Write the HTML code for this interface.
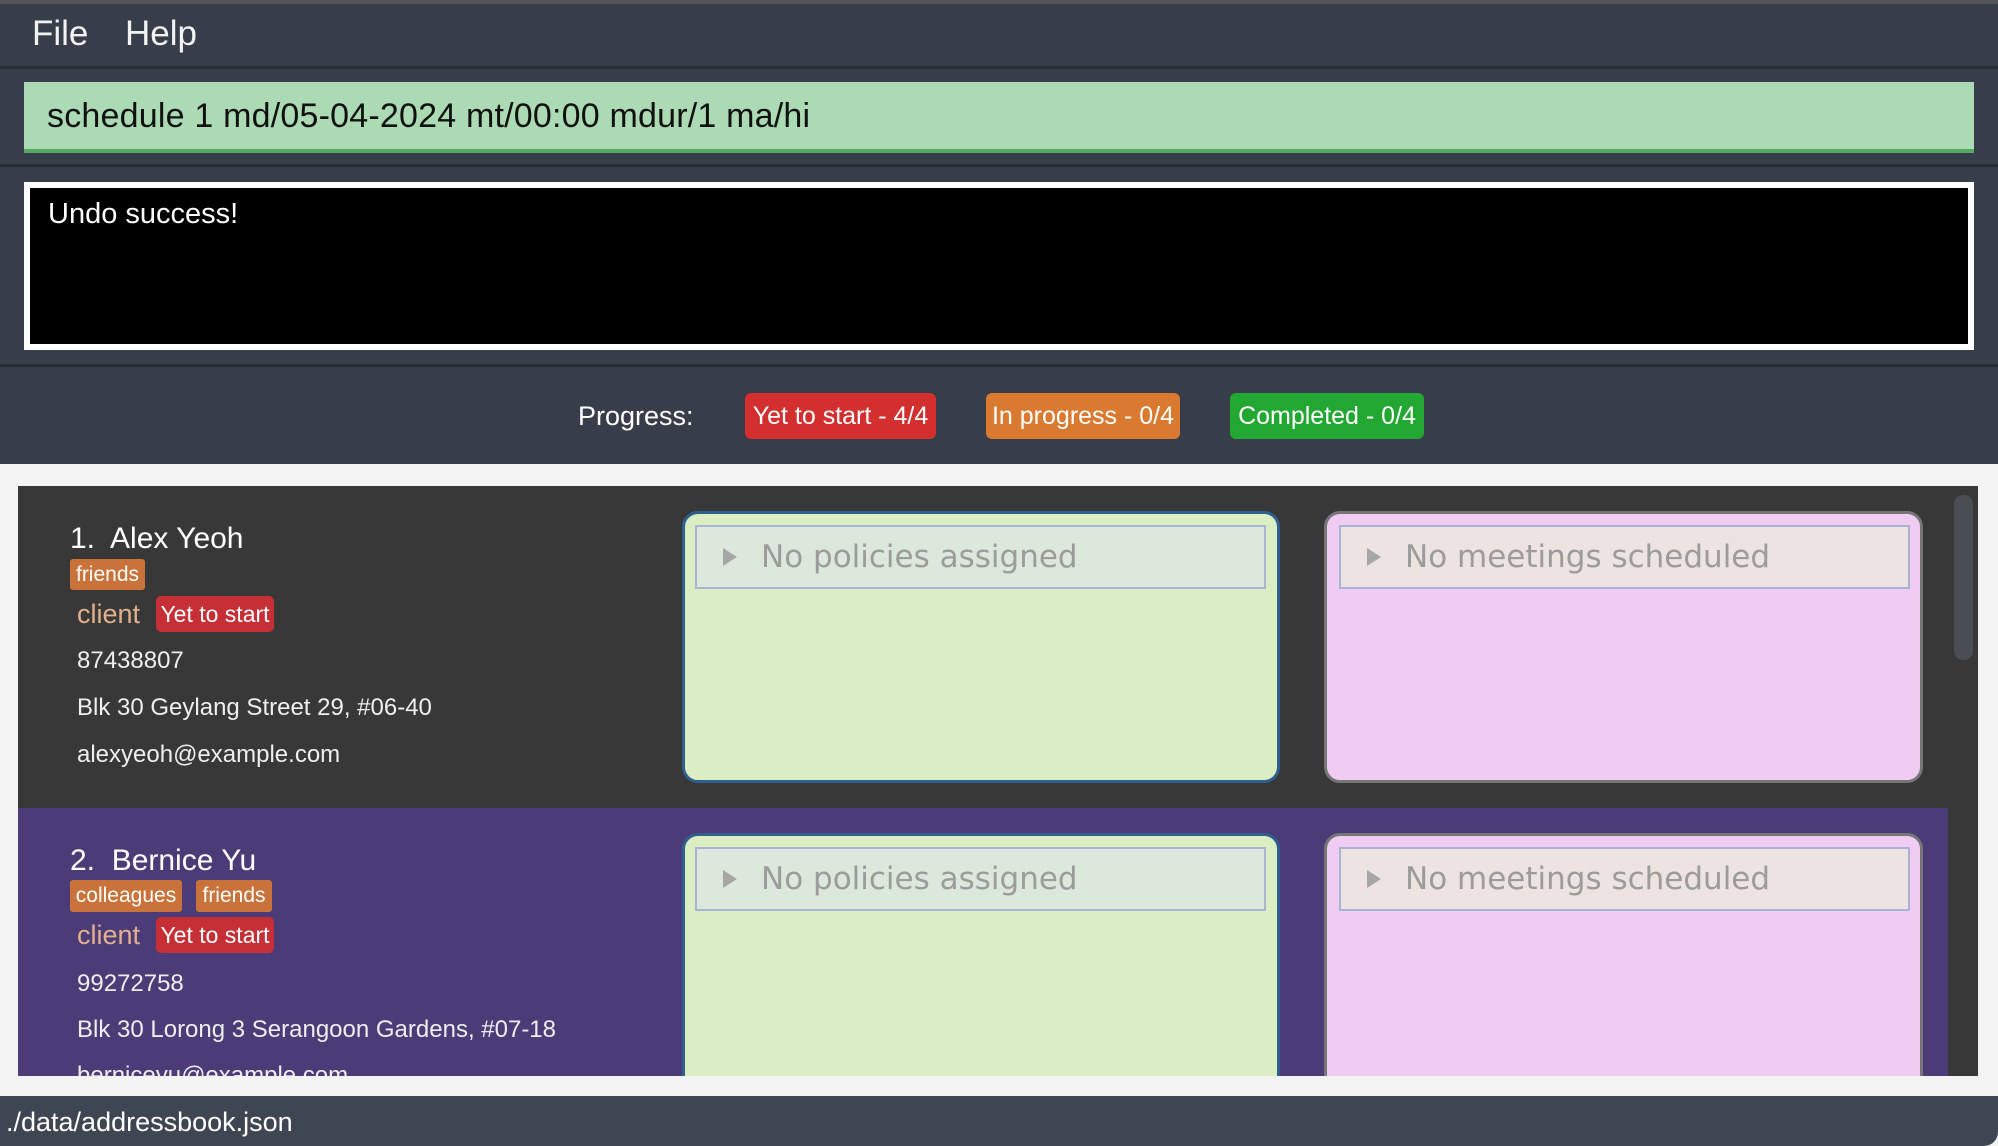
<!DOCTYPE html>
<html><head><style>
*{margin:0;padding:0;box-sizing:border-box}
body{width:1998px;height:1146px;overflow:hidden;background:#f3f3f3;font-family:"Liberation Sans",sans-serif;position:relative}
.a{position:absolute}
.badge{position:absolute;color:#fff;border-radius:6px;display:flex;align-items:center;justify-content:center;white-space:nowrap}
.t{position:absolute;white-space:nowrap;color:#fff}
.pol{position:absolute;background:#dbedc3;border:3px solid #2f5f8f;border-radius:16px}
.meet{position:absolute;background:#f0ccf2;border:3px solid #767676;border-radius:16px}
.hdr{position:absolute;border:2px solid #a9b4d4;font-family:"DejaVu Sans",sans-serif;font-size:31px;color:#9c9c9c;letter-spacing:0;display:flex;align-items:center}
.tri{width:0;height:0;border-top:9px solid transparent;border-bottom:9px solid transparent;border-left:14px solid #a6a6a6;margin-left:26px;margin-right:24px}
</style></head><body>
<div class="a" style="left:0;top:0;width:1998px;height:4px;background:#555"></div>
<div class="a" style="left:0;top:4px;width:1998px;height:63px;background:#373d49"></div>
<div class="t" style="left:32px;top:14px;font-size:35px;color:#f2f2f2">File</div>
<div class="t" style="left:125px;top:14px;font-size:35px;color:#f2f2f2">Help</div>
<div class="a" style="left:0;top:66px;width:1998px;height:3px;background:#272c36"></div>
<div class="a" style="left:0;top:69px;width:1998px;height:95px;background:#373d49"></div>
<div class="a" style="left:24px;top:82px;width:1950px;height:71px;background:#acdab5;border-bottom:4px solid #55aa66"></div>
<div class="t" style="left:47px;top:97px;font-size:34px;letter-spacing:0.2px;color:#111">schedule 1 md/05-04-2024 mt/00:00 mdur/1 ma/hi</div>
<div class="a" style="left:0;top:164px;width:1998px;height:3px;background:#272c36"></div>
<div class="a" style="left:0;top:167px;width:1998px;height:197px;background:#373d49"></div>
<div class="a" style="left:24px;top:182px;width:1950px;height:168px;background:#000;border:6px solid #fff"></div>
<div class="t" style="left:48px;top:198px;font-size:29px">Undo success!</div>
<div class="a" style="left:0;top:364px;width:1998px;height:3px;background:#272c36"></div>
<div class="a" style="left:0;top:367px;width:1998px;height:97px;background:#373d49"></div>
<div class="t" style="left:578px;top:401px;font-size:27px">Progress:</div>
<div class="badge" style="left:745px;top:393px;width:191px;height:46px;background:#d32f2f;font-size:25px">Yet to start - 4/4</div>
<div class="badge" style="left:986px;top:393px;width:194px;height:46px;background:#d97a30;font-size:25px">In progress - 0/4</div>
<div class="badge" style="left:1230px;top:393px;width:194px;height:46px;background:#22a832;font-size:25px">Completed - 0/4</div>

<div class="a" style="left:18px;top:486px;width:1960px;height:590px;background:#383838"></div>
<div class="a" style="left:1954px;top:495px;width:19px;height:165px;background:#4a4d52;border-radius:9px"></div>
<div class="t" style="left:70px;top:522px;font-size:30px">1.&nbsp; Alex Yeoh</div>
<div class="badge" style="left:70px;top:559px;width:75px;height:31px;background:#c9733a;font-size:21px;border-radius:3px">friends</div>
<div class="t" style="left:77px;top:599px;font-size:27px;color:#e3b08e">client</div>
<div class="badge" style="left:156px;top:596px;width:118px;height:36px;background:#c62f35;font-size:23px;border-radius:5px">Yet to start</div>
<div class="t" style="left:77px;top:647px;font-size:24px;color:#eee">87438807</div>
<div class="t" style="left:77px;top:694px;font-size:24px;color:#eee">Blk 30 Geylang Street 29, #06-40</div>
<div class="t" style="left:77px;top:741px;font-size:24px;color:#eee">alexyeoh@example.com</div>
<div class="pol" style="left:682px;top:511px;width:598px;height:272px"></div>
<div class="hdr" style="left:695px;top:525px;width:571px;height:64px;background:#dce8dc"><div class="tri"></div>No policies assigned</div>
<div class="meet" style="left:1324px;top:511px;width:599px;height:272px"></div>
<div class="hdr" style="left:1339px;top:525px;width:571px;height:64px;background:#ede3e0"><div class="tri"></div>No meetings scheduled</div>
<div class="a" style="left:18px;top:808px;width:1930px;height:268px;background:#4b3c78;overflow:hidden">
<div class="t" style="left:52px;top:36px;font-size:30px">2.&nbsp; Bernice Yu</div>
<div class="badge" style="left:52px;top:72px;width:112px;height:32px;background:#c9733a;font-size:21px;border-radius:3px">colleagues</div>
<div class="badge" style="left:178px;top:72px;width:76px;height:32px;background:#c9733a;font-size:21px;border-radius:3px">friends</div>
<div class="t" style="left:59px;top:112px;font-size:27px;color:#e3b08e">client</div>
<div class="badge" style="left:138px;top:109px;width:118px;height:36px;background:#c62f35;font-size:23px;border-radius:5px">Yet to start</div>
<div class="t" style="left:59px;top:162px;font-size:24px;color:#eee">99272758</div>
<div class="t" style="left:59px;top:208px;font-size:24px;color:#eee">Blk 30 Lorong 3 Serangoon Gardens, #07-18</div>
<div class="t" style="left:59px;top:254px;font-size:24px;color:#eee">berniceyu@example.com</div>
<div class="pol" style="left:664px;top:25px;width:598px;height:300px"></div>
<div class="hdr" style="left:677px;top:39px;width:571px;height:64px;background:#dce8dc"><div class="tri"></div>No policies assigned</div>
<div class="meet" style="left:1306px;top:25px;width:599px;height:300px"></div>
<div class="hdr" style="left:1321px;top:39px;width:571px;height:64px;background:#ede3e0"><div class="tri"></div>No meetings scheduled</div>
</div>
<div class="a" style="left:0;top:1096px;width:1998px;height:50px;background:#3e4652;border-bottom-right-radius:14px"></div>
<div class="t" style="left:6px;top:1107px;font-size:27px">./data/addressbook.json</div>
</body></html>
